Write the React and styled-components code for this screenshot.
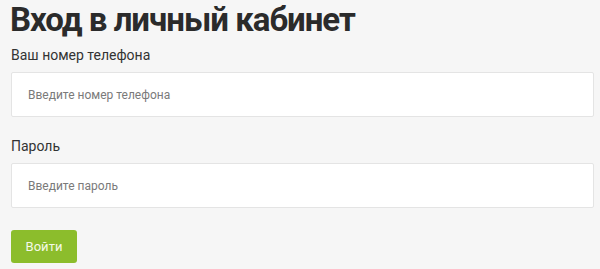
import React from "react";
import styled, { createGlobalStyle } from "styled-components";

const Global = createGlobalStyle`
  html, body { margin: 0; padding: 0; background: #f6f6f6; }
  body { font-family: Roboto, "Noto Sans", sans-serif; }
`;

const Page = styled.div`
  padding: 0 6px 0 11px;
  display: flex;
  flex-direction: column;
`;

const Title = styled.h1`
  margin: 0 0 5px -1px;
  font-size: 33px;
  line-height: 40px;
  font-weight: 700;
  letter-spacing: -1px;
  color: #2b2b2b;
`;

const Field = styled.div`
  display: flex;
  flex-direction: column;
  gap: 7px;
  margin-bottom: ${(p) => p.$mb}px;
`;

const Label = styled.label`
  font-size: 14px;
  line-height: 20px;
  color: #333;
`;

const Input = styled.input`
  box-sizing: border-box;
  width: 100%;
  height: 45px;
  padding: 0 16px;
  border: 1px solid #e4e4e4;
  border-radius: 2px;
  background: #fff;
  font-family: Roboto, sans-serif;
  font-size: 12px;
  color: #333;
  outline: none;
  &::placeholder { color: #7a7a7a; }
`;

const Button = styled.button`
  align-self: flex-start;
  width: 66px;
  height: 33px;
  border: none;
  border-radius: 3px;
  background: #8cbd2c;
  color: #f4f9e8;
  font-family: Roboto, sans-serif;
  font-size: 13px;
  cursor: pointer;
`;

export default function App() {
  return (
    <>
      <Global />
      <Page>
        <Title>Вход в личный кабинет</Title>
        <Field $mb={19}>
          <Label>Ваш номер телефона</Label>
          <Input placeholder="Введите номер телефона" />
        </Field>
        <Field $mb={22}>
          <Label>Пароль</Label>
          <Input type="password" placeholder="Введите пароль" />
        </Field>
        <Button>Войти</Button>
      </Page>
    </>
  );
}
